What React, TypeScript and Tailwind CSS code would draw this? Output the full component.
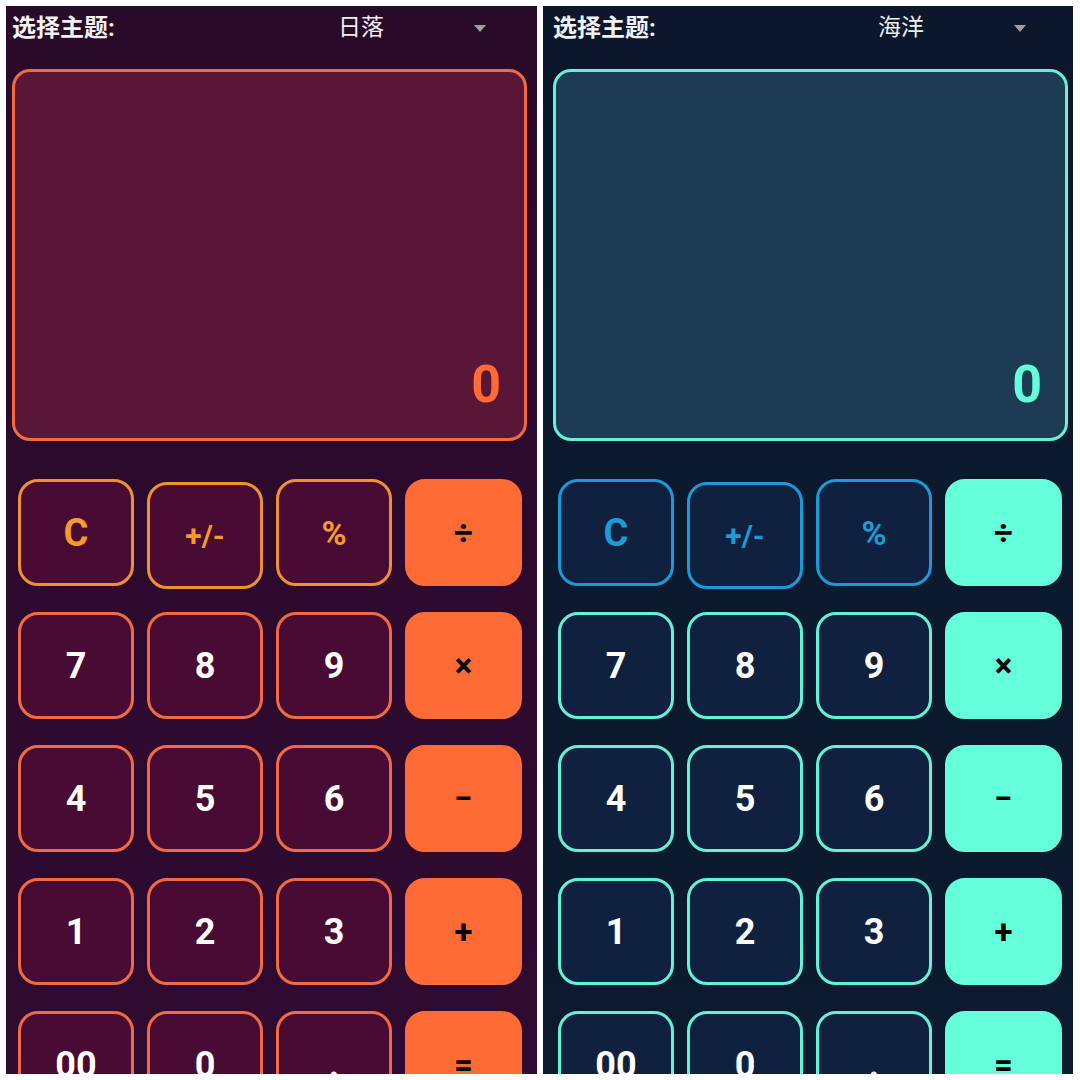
import React from 'react';

type Theme = {
  name: string;
  panel: string;
  head: string;
  picker: string;
  pad: string;
  displayBox: string;
  displayText: string;
  fnKey: string;
  numKey: string;
  opKey: string;
};

const THEMES: Theme[] = [
  {
    name: '日落',
    panel: 'w-[531px] bg-linear-to-b from-[#2a0a29] to-[#2f0a31]',
    head: 'pl-[6px]',
    picker: 'mr-[51px]',
    pad: 'pl-[12px]',
    displayBox: 'ml-[6px] border-[#f26b3a] bg-[#5a1637]',
    displayText: 'text-[#ff6b35]',
    fnKey: 'border-[#f0922b] bg-[#470b34] text-[#f39c29]',
    numKey: 'border-[#f26a42] bg-[#470b34] text-white',
    opKey: 'border-[#ff6b35] bg-[#ff6b35] text-black',
  },
  {
    name: '海洋',
    panel: 'w-[530px] bg-linear-to-b from-[#0b182c] to-[#0c1a2f]',
    head: 'pl-[10px]',
    picker: 'mr-[47px]',
    pad: 'pl-[15px]',
    displayBox: 'ml-[10px] border-[#64f2d6] bg-[#1b3c52]',
    displayText: 'text-[#64ffda]',
    fnKey: 'border-[#1a9ad8] bg-[#10213f] text-[#1d9bd6]',
    numKey: 'border-[#64f2d6] bg-[#10213f] text-white',
    opKey: 'border-[#64ffda] bg-[#64ffda] text-black',
  },
];

type Key = { label: string; kind: 'fn' | 'num' | 'op'; size: string; shift?: boolean };

const KEYS: Key[] = [
  { label: 'C', kind: 'fn', size: 'text-[38px]' },
  { label: '+/-', kind: 'fn', size: 'text-[30px]', shift: true },
  { label: '%', kind: 'fn', size: 'text-[34px]' },
  { label: '÷', kind: 'op', size: 'text-[33px]' },
  { label: '7', kind: 'num', size: 'text-[36px]' },
  { label: '8', kind: 'num', size: 'text-[36px]' },
  { label: '9', kind: 'num', size: 'text-[36px]' },
  { label: '×', kind: 'op', size: 'text-[33px]' },
  { label: '4', kind: 'num', size: 'text-[36px]' },
  { label: '5', kind: 'num', size: 'text-[36px]' },
  { label: '6', kind: 'num', size: 'text-[36px]' },
  { label: '−', kind: 'op', size: 'text-[33px]' },
  { label: '1', kind: 'num', size: 'text-[36px]' },
  { label: '2', kind: 'num', size: 'text-[36px]' },
  { label: '3', kind: 'num', size: 'text-[36px]' },
  { label: '+', kind: 'op', size: 'text-[33px]' },
  { label: '00', kind: 'num', size: 'text-[36px]' },
  { label: '0', kind: 'num', size: 'text-[36px]' },
  { label: '.', kind: 'num', size: 'text-[36px]' },
  { label: '=', kind: 'op', size: 'text-[33px]' },
];

function Calculator({ theme }: { theme: Theme }) {
  const keyClass = (k: Key) =>
    k.kind === 'fn' ? theme.fnKey : k.kind === 'num' ? theme.numKey : theme.opKey;

  return (
    <div className={`${theme.panel} h-full overflow-hidden flex flex-col`}>
      {/* theme picker */}
      <div className={`${theme.head} h-[43px] shrink-0 flex items-center`}>
        <span className="text-[24px] font-bold text-[#f2f2f2] leading-none">选择主题:</span>
        <div className={`${theme.picker} ml-auto w-[238px] flex items-center`}>
          <span className="flex-1 text-center text-[23px] text-[#f0f0f0] leading-none">{theme.name}</span>
          <svg width="12" height="7" viewBox="0 0 12 7" className="mt-[1px]">
            <path d="M0 0h12L6 7z" fill="#9e9e9e" />
          </svg>
        </div>
      </div>

      {/* display */}
      <div
        className={`${theme.displayBox} mt-[20px] w-[515px] h-[372px] shrink-0 border-[3px] rounded-[18px] flex items-end justify-end pr-[23px] pb-[27px]`}
      >
        <span className={`${theme.displayText} text-[52px] font-bold leading-none`}>0</span>
      </div>

      {/* keypad */}
      <div
        className={`${theme.pad} shrink-0 mt-[38px] grid grid-cols-[116px_116px_116px_117px] gap-x-[13px] gap-y-[26px]`}
      >
        {KEYS.map((k) => (
          <button
            key={k.label}
            className={`${keyClass(k)} ${k.size} ${k.shift ? 'translate-y-[3px]' : ''} h-[107px] border-[3px] rounded-[20px] font-bold leading-none flex items-center justify-center`}
          >
            {k.label}
          </button>
        ))}
      </div>
    </div>
  );
}

export default function App() {
  return (
    <div className="w-[1080px] h-[1080px] bg-white p-[6px] flex gap-[6px] font-['Roboto','Noto_Sans_CJK_SC',sans-serif]">
      {THEMES.map((t) => (
        <Calculator key={t.name} theme={t} />
      ))}
    </div>
  );
}
